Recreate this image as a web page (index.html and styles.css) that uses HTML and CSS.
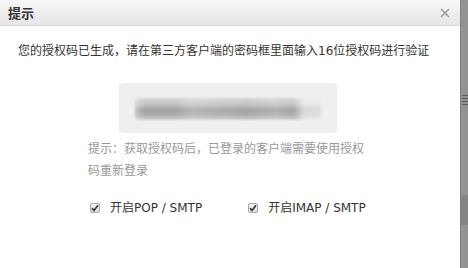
FILE: index.html
```html
<!DOCTYPE html>
<html lang="zh-CN">
<head>
<meta charset="utf-8">
<link rel="stylesheet" href="styles.css">
</head>
<body>
<div class="page">
  <div class="dialog">
    <div class="dlg-head">
      <span class="dlg-title">提示</span>
      <span class="dlg-close"><svg width="10" height="10" viewBox="0 0 10 10"><path d="M1 1L9 9M9 1L1 9" stroke="#9a9a9a" stroke-width="1.5"/></svg></span>
    </div>
    <div class="dlg-body">
      <p class="msg">您的授权码已生成，请在第三方客户端的密码框里面输入16位授权码进行验证</p>
      <div class="col">
        <div class="code-box"><div class="code-blur"></div></div>
        <p class="tip">提示：获取授权码后，已登录的客户端需要使用授权码重新登录</p>
        <div class="opts">
          <label class="opt"><span class="cb"><svg width="8" height="8" viewBox="0 0 8 8"><path d="M1 4.2L3 6.4L7 1.2" fill="none" stroke="#333" stroke-width="1.6"/></svg></span>开启POP / SMTP</label>
          <label class="opt"><span class="cb"><svg width="8" height="8" viewBox="0 0 8 8"><path d="M1 4.2L3 6.4L7 1.2" fill="none" stroke="#333" stroke-width="1.6"/></svg></span>开启IMAP / SMTP</label>
        </div>
      </div>
    </div>
  </div>
  <div class="backdrop">
    <div class="bg-mark"></div>
    <div class="bg-band"></div>
  </div>
</div>
</body>
</html>
```
FILE: styles.css
```css
html, body {
  margin: 0;
  padding: 0;
  width: 468px;
  height: 268px;
  overflow: hidden;
  background: #8f8f8f;
  font-family: "DejaVu Sans", "Noto Sans CJK SC", sans-serif;
  font-size: 12px;
  color: #333;
}
.page {
  display: flex;
  height: 268px;
}
.dialog {
  width: 460px;
  height: 268px;
  background: #fff;
  display: flex;
  flex-direction: column;
}
.dlg-head {
  height: 25px;
  border-bottom: 1px solid #d6d6d6;
  background: linear-gradient(#f7f7f7, #e6e6e6);
  display: flex;
  align-items: center;
  justify-content: space-between;
  padding: 0 10px 0 8px;
}
.dlg-title {
  font-family: "Noto Sans CJK SC", sans-serif;
  font-size: 13px;
  font-weight: bold;
  color: #333;
}
.dlg-close {
  display: flex;
  margin-top: 1px;
}
.dlg-body {
  padding: 16px 0 0 0;
}
.msg {
  margin: 0;
  padding-left: 18px;
  line-height: 18px;
  white-space: nowrap;
  color: #333;
}
.col {
  width: 280px;
  margin: 23px 0 0 88px;
}
.code-box {
  width: 218px;
  height: 50px;
  margin-left: 31px;
  background: #efefef;
  border-radius: 4px;
  display: flex;
  align-items: center;
  justify-content: center;
}
.code-blur {
  width: 186px;
  height: 22px;
  margin-top: 2px;
  background:
    linear-gradient(90deg, rgba(255,255,255,0.35) 0%, rgba(255,255,255,0) 5%, rgba(255,255,255,0) 22%, rgba(255,255,255,0.2) 30%, rgba(255,255,255,0.1) 45%, rgba(255,255,255,0) 60%, rgba(255,255,255,0.15) 75%, rgba(255,255,255,0) 85%, rgba(255,255,255,0.6) 91%, rgba(255,255,255,0.6) 100%),
    linear-gradient(#d6d6d6 0%, #c2c2c2 30%, #a0a0a0 55%, #afafaf 80%, #cfcfcf 100%);
  filter: blur(1px);
  border-radius: 3px;
}
.tip {
  margin: 4px 0 0 0;
  line-height: 22px;
  color: #999;
  font-family: "Noto Sans CJK SC", sans-serif;
}
.opts {
  display: flex;
  margin-top: 18px;
  padding-left: 2px;
  gap: 46px;
}
.opt {
  display: flex;
  align-items: center;
  line-height: 18px;
  color: #333;
}
.cb {
  width: 10px;
  height: 10px;
  box-sizing: border-box;
  border: 1px solid #aaa;
  border-radius: 2px;
  background: linear-gradient(#f4f4f4, #dcdcdc);
  display: flex;
  align-items: center;
  justify-content: center;
  margin-right: 10px;
}
.backdrop {
  flex: 1;
  position: relative;
  border-left: 1px solid #7e7e7e;
  background: #939393;
  overflow: hidden;
}
.bg-mark {
  position: absolute;
  left: 1px;
  top: 95px;
  width: 6px;
  height: 10px;
  background: repeating-linear-gradient(#4a4a4a 0 1px, transparent 1px 3px);
  opacity: 0.8;
}
.bg-band {
  position: absolute;
  left: 0;
  right: 0;
  top: 195px;
  height: 30px;
  background: #858585;
}
```
